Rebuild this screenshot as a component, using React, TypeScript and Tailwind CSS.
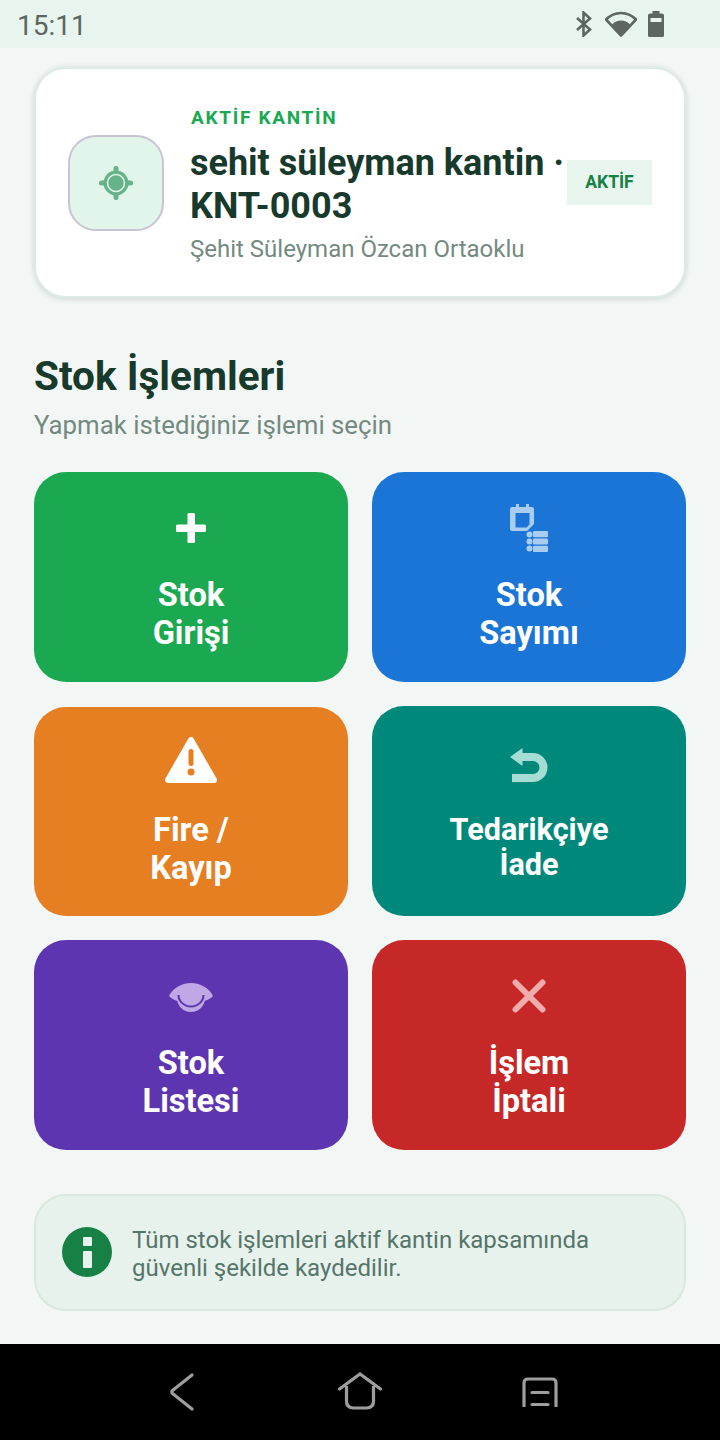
import React from "react";

const Tile = ({ bg, mt, h, icon, lines, text }: { bg: string; mt?: string; h?: string; icon: React.ReactNode; lines: string[]; text?: string }) => (
  <div className={`${bg} ${mt ?? ""} ${h ?? "h-[210px]"} rounded-[32px] flex flex-col items-center pt-[28px]`}>
    <div className="h-[58px] w-[60px] flex items-center justify-center">{icon}</div>
    <div className={`text-white font-bold text-center ${text ?? "mt-[18px] text-[32.600px] leading-[38px]"}`}>
      {lines.map((l) => (
        <div key={l}>{l}</div>
      ))}
    </div>
  </div>
);

export default function App() {
  return (
    <div className="w-[720px] h-[1440px] flex flex-col bg-[#f2f7f5] overflow-hidden font-['Roboto',sans-serif]">
      <div className="h-[48px] bg-[#e8f5ee] flex items-center justify-between pl-[17px] pr-[56px] shrink-0">
        <span className="text-[28px] text-[#5e6662] leading-none pt-[3px]">15:11</span>
        <div className="flex items-center gap-[11px]">
          <svg width="20" height="26" viewBox="0 0 20 26" fill="none" stroke="#5e6662" strokeWidth="2.6">
            <path d="M3 7l13 11.500-6.500 6V1.500l6.500 6L3 19" />
          </svg>
          <svg width="32" height="26" viewBox="0 0 32 26">
            <path d="M16 24.500 1 8.500C5 4.500 10 2 16 2s11 2.500 15 6.500z" fill="none" stroke="#5e6662" strokeWidth="2.600" strokeLinejoin="round" />
            <path d="M16 24 7 13.500C9.500 11 12.500 9.500 16 9.500s6.500 1.500 9 4z" fill="#5e6662" />
          </svg>
          <svg width="16" height="26" viewBox="0 0 16 26">
            <path d="M4.500 0h7v2.500h2.500a2 2 0 0 1 2 1.500v20.500a1.500 1.500 0 0 1-1.500 1.500h-13A1.500 1.500 0 0 1 0 24.500V4a2 2 0 0 1 2-1.500h2.500z" fill="#5e6662" />
            <rect x="2.500" y="7" width="11" height="4" fill="#e8f5ee" />
          </svg>
        </div>
      </div>

      <div className="flex-1 flex flex-col px-[34px] pt-[19px]">
        <div className="h-[231px] bg-white rounded-[32px] border-2 border-[#dcebe3] shadow-[0_1px_6px_rgba(0,0,0,0.15)] flex items-center pl-[32px] shrink-0">
          <div className="w-[96px] h-[96px] rounded-[28px] bg-[#e2f5ea] border-2 border-[#c9c4d4] flex items-center justify-center shrink-0">
            <svg width="34" height="34" viewBox="0 0 34 34">
              <rect x="14.500" y="0" width="5" height="34" rx="2.500" fill="#66b38a" />
              <rect x="0" y="14.500" width="34" height="5" rx="2.500" fill="#66b38a" />
              <circle cx="17" cy="17" r="12.500" fill="#66b38a" />
              <circle cx="17" cy="17" r="8.500" fill="#66b38a" stroke="#e2f5ea" strokeWidth="1.500" />
            </svg>
          </div>
          <div className="ml-[26px] w-[377px] shrink-0 pt-[4px]">
            <div className="text-[19px] leading-[24px] font-bold tracking-[1.700px] pl-[1px] text-[#1aa850]">AKTİF KANTİN</div>
            <div className="mt-[12px] text-[36px] leading-[43px] font-bold text-[#173a2c]">
              sehit süleyman kantin ·<br />
              KNT-0003
            </div>
            <div className="mt-[6px] text-[24px] leading-[30px] text-[#748a80]">Şehit Süleyman Özcan Ortaoklu</div>
          </div>
          <div className="w-[85px] h-[45px] bg-[#e8f5ee] flex items-center justify-center text-[17.500px] font-bold text-[#178045] shrink-0">
            AKTİF
          </div>
        </div>

        <div className="mt-[53px] text-[40.500px] leading-[50px] font-bold text-[#173a2c]">Stok İşlemleri</div>
        <div className="mt-[9px] text-[25.800px] leading-[30px] text-[#748a80]">Yapmak istediğiniz işlemi seçin</div>

        <div className="mt-[32px] grid grid-cols-2 gap-x-[24px]">
          <Tile
            bg="bg-[#1aa850]"
            lines={["Stok", "Girişi"]}
            icon={
              <svg width="30" height="30" viewBox="0 0 30 30" fill="#fff" className="mb-[2px]">
                <rect x="11.500" y="0" width="7.500" height="30" rx="1.500" />
                <rect x="0" y="11.500" width="30" height="7.500" rx="1.500" />
              </svg>
            }
          />
          <Tile
            bg="bg-[#1a75d6]"
            lines={["Stok", "Sayımı"]}
            icon={
              <svg width="38" height="48" viewBox="0 0 38 48" fill="#a9cdf0" className="mb-[2px]">
                <path d="M2 3h4V0h3v3h7V0h3v3h3a2 2 0 0 1 2 2v15l-7 7H2a2 2 0 0 1-2-2V5a2 2 0 0 1 2-2zM5.500 9v14.500h11L19.500 20.500V9z" fillRule="evenodd" />
                <circle cx="19.500" cy="30.500" r="3" />
                <circle cx="19.500" cy="37.500" r="3" />
                <circle cx="19.500" cy="44.500" r="3" />
                <rect x="23" y="27" width="15" height="6.200" rx="1" />
                <rect x="23" y="34.400" width="15" height="6.200" rx="1" />
                <rect x="23" y="41.800" width="15" height="6.200" rx="1" />
              </svg>
            }
          />
          <Tile
            bg="bg-[#e67e22]"
            mt="mt-[25px]"
            h="h-[209px]"
            lines={["Fire /", "Kayıp"]}
            icon={
              <svg width="54" height="48" viewBox="0 0 54 48" className="mb-[8px]">
                <path d="M27 4 4 44h46z" fill="#fff" stroke="#fff" strokeWidth="6" strokeLinejoin="round" />
                <rect x="24.500" y="13" width="5" height="17" rx="2.500" fill="#e67e22" />
                <circle cx="27" cy="36" r="3.500" fill="#e67e22" />
              </svg>
            }
          />
          <Tile
            bg="bg-[#00897b]"
            mt="mt-[24px]"
            text="mt-[20px] text-[30.600px] leading-[35px]"
            lines={["Tedarikçiye", "İade"]}
            icon={
              <svg width="38" height="34" viewBox="0 0 38 34" fill="none" stroke="#a5dcd4" strokeWidth="8" className="mt-[4px]">
                <path d="M10 9h13a10.500 10.500 0 0 1 0 21H2" />
                <path d="M12.500 0 0 9l12.500 9z" fill="#a5dcd4" stroke="none" />
              </svg>
            }
          />
          <Tile
            bg="bg-[#5e35b1]"
            mt="mt-[24px]"
            lines={["Stok", "Listesi"]}
            icon={
              <svg width="44" height="29" viewBox="0 0 44 29">
                <path d="M1 11C6 4 13 0 22 0s16 4 21 11c1 1.500 1 2.500-.5 3.500C39 17 37 18 33 18H11c-4 0-6-1-9.500-3.500C0 13.500 0 12.500 1 11z" fill="#c0a8e6" />
                <circle cx="22" cy="15" r="14" fill="#c0a8e6" />
                <path d="M9.500 12a12.500 11.500 0 0 0 25 0" fill="none" stroke="#5e35b1" strokeWidth="2" />
                <circle cx="22" cy="11" r="10" fill="#c0a8e6" />
              </svg>
            }
          />
          <Tile
            bg="bg-[#c62828]"
            mt="mt-[24px]"
            lines={["İşlem", "İptali"]}
            icon={
              <svg width="34" height="34" viewBox="0 0 34 34" stroke="#eeacac" strokeWidth="6" strokeLinecap="round" className="mb-[2px]">
                <path d="M3.500 3.500l27 27M30.500 3.500l-27 27" />
              </svg>
            }
          />
        </div>

        <div className="mt-[44px] h-[117px] rounded-[32px] bg-[#e8f2ec] border-2 border-[#d8e8df] flex items-center pl-[26px] shrink-0">
          <div className="w-[50px] h-[50px] rounded-full bg-[#178045] flex flex-col items-center justify-center gap-[5px] shrink-0 mt-[-1px]">
            <div className="w-[9px] h-[9px] bg-[#e8f2ec] rounded-[1px]" />
            <div className="w-[9px] h-[17px] bg-[#e8f2ec] rounded-[1px]" />
          </div>
          <div className="ml-[20px] pt-[2px] text-[24px] leading-[28px] text-[#55756a]">
            Tüm stok işlemleri aktif kantin kapsamında
            <br />
            güvenli şekilde kaydedilir.
          </div>
        </div>
      </div>

      <div className="h-[96px] bg-black shrink-0 flex items-center pl-[169px]">
        <svg width="26" height="38" viewBox="0 0 26 38" fill="none" stroke="#9e9e9e" strokeWidth="3.200" strokeLinecap="round" strokeLinejoin="round" className="mt-[-1px]">
          <path d="M23 2 3.500 17.500a2 2 0 0 0 0 3L23 36" />
        </svg>
        <svg width="44" height="38" viewBox="0 0 44 38" fill="none" stroke="#9e9e9e" strokeWidth="3.200" className="ml-[143px] mt-[-3px]">
          <path d="M1.500 17 22 2l20.500 15" strokeLinecap="round" />
          <path d="M8.500 14v15c0 5 3 7 7 7h13c4 0 7-2 7-7V14" />
        </svg>
        <svg width="36" height="30" viewBox="0 0 36 30" fill="none" stroke="#9e9e9e" strokeWidth="3.200" className="ml-[140px]">
          <path d="M2 30V6c0-2.500 1.500-4 4-4h24c2.500 0 4 1.500 4 4v24" />
          <path d="M10 15.500h16M10 27.500h16" strokeLinecap="round" />
        </svg>
      </div>
    </div>
  );
}
